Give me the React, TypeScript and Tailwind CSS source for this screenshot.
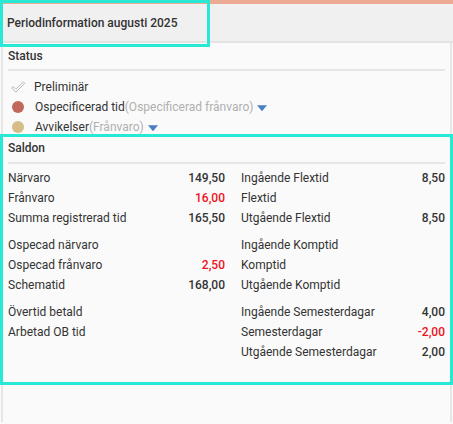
import React from "react";

type Row = { label: string; value?: string; red?: boolean };

const left: Row[][] = [
  [
    { label: "Närvaro", value: "149,50" },
    { label: "Frånvaro", value: "16,00", red: true },
    { label: "Summa registrerad tid", value: "165,50" },
  ],
  [
    { label: "Ospecad närvaro" },
    { label: "Ospecad frånvaro", value: "2,50", red: true },
    { label: "Schematid", value: "168,00" },
  ],
  [{ label: "Övertid betald" }, { label: "Arbetad OB tid" }],
];

const right: Row[][] = [
  [
    { label: "Ingående Flextid", value: "8,50" },
    { label: "Flextid" },
    { label: "Utgående Flextid", value: "8,50" },
  ],
  [
    { label: "Ingående Komptid" },
    { label: "Komptid" },
    { label: "Utgående Komptid" },
  ],
  [
    { label: "Ingående Semesterdagar", value: "4,00" },
    { label: "Semesterdagar", value: "-2,00", red: true },
    { label: "Utgående Semesterdagar", value: "2,00" },
  ],
];

function Caret() {
  return (
    <svg width="10" height="7" viewBox="0 0 11 7" className="ml-1 mt-[2px]">
      <path d="M0 0 H11 L5.5 6.5 Z" fill="#4a7fc1" />
    </svg>
  );
}

function Column({ groups }: { groups: Row[][] }) {
  return (
    <div className="flex flex-col gap-[7px]">
      {groups.map((g, i) => (
        <div key={i} className="flex flex-col">
          {g.map((r) => (
            <div key={r.label} className="flex h-5 items-center justify-between">
              <span>{r.label}</span>
              {r.value && (
                <span className={`font-medium ${r.red ? "text-[#f0101c]" : "text-[#333]"}`}>
                  {r.value}
                </span>
              )}
            </div>
          ))}
        </div>
      ))}
    </div>
  );
}

export default function App() {
  return (
    <div
      className="relative h-[424px] w-[453px] overflow-hidden bg-[#fafafa] text-[12px] text-[#333]"
      style={{ fontFamily: "Roboto, 'Liberation Sans', sans-serif" }}
    >
      <div className="h-1 bg-[#eca994]" />
      <div className="flex h-[39px] items-center border-b-2 border-[#e4e4e4] bg-[#f0f0f0] px-[7px] font-medium">
        Periodinformation augusti 2025
      </div>

      <div className="mx-[1px] flex h-[379px] flex-col border-x-2 border-[#e6e6e6] px-[5px]">
        <div className="flex h-[24px] items-end pb-[2px] font-medium">Status</div>
        <div className="mt-[2px] h-[2px] bg-[#e6e6e6]" />
        <div className="mt-[6px] flex flex-col">
          <div className="flex h-5 items-center">
            <svg width="15" height="13" viewBox="0 0 16 14" className="ml-[3px] mr-[8px]">
              <path
                d="M0.8 7.6 L2.3 6.1 L5.2 9 L13.2 1 L14.7 2.5 L5.2 12 Z"
                fill="#fff"
                stroke="#a8a8a8"
                strokeWidth="0.9"
                strokeLinejoin="round"
              />
            </svg>
            <span>Preliminär</span>
          </div>
          <div className="flex h-5 items-center">
            <span className="ml-[4px] mr-[11px] h-[12px] w-[12px] rounded-full bg-[#c1685c]" />
            <span>Ospecificerad tid</span>
            <span className="text-[#b0b0b0]">(Ospecificerad frånvaro)</span>
            <Caret />
          </div>
          <div className="flex h-5 items-center">
            <span className="ml-[4px] mr-[11px] h-[12px] w-[12px] rounded-full bg-[#d5bc88]" />
            <span>Avvikelser</span>
            <span className="text-[#b0b0b0]">(Frånvaro)</span>
            <Caret />
          </div>
        </div>

        <div className="flex h-[20px] items-end font-medium">Saldon</div>
        <div className="mt-[5px] h-[2px] bg-[#e6e6e6]" />
        <div className="mt-[4px] grid grid-cols-[217px_1fr] gap-x-4">
          <Column groups={left} />
          <Column groups={right} />
        </div>
      </div>

      <div className="pointer-events-none absolute left-0 top-0 h-[47px] w-[210px] border-[3px] border-[#27e9d5]" />
      <div className="pointer-events-none absolute left-0 top-[134px] h-[251px] w-[453px] border-[3px] border-[#27e9d5]" />
    </div>
  );
}
